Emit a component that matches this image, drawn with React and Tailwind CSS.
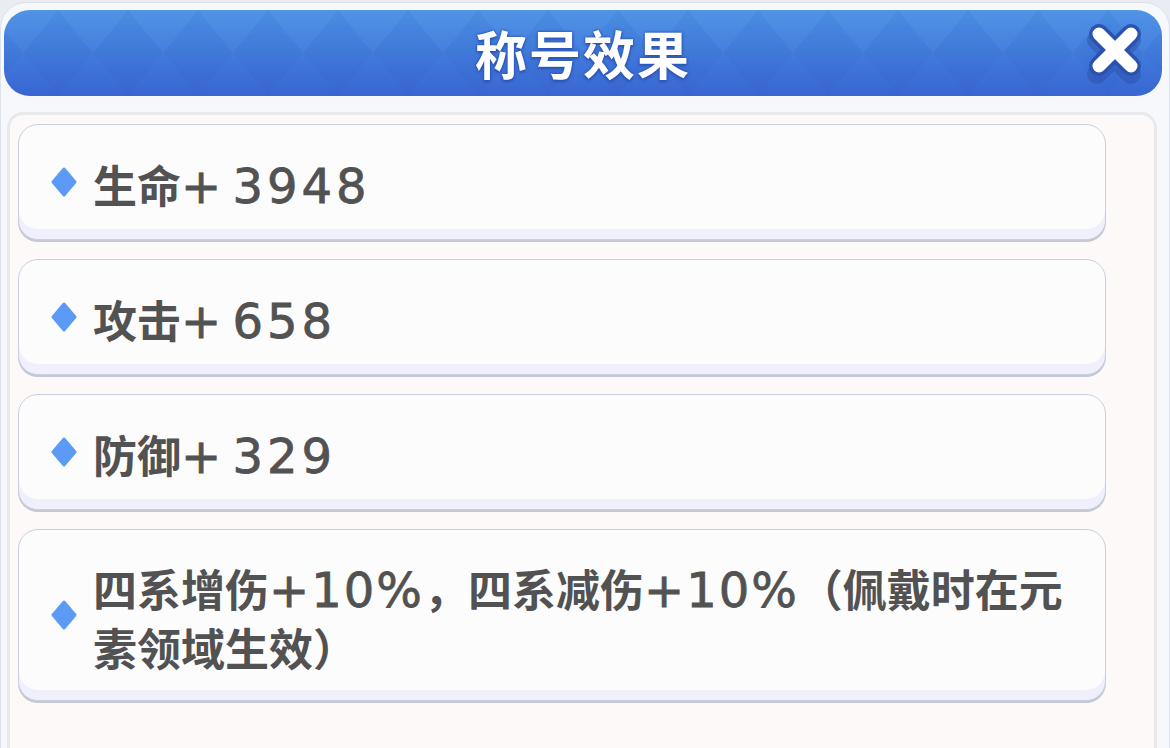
import React from 'react';

const cjk = "font-['Noto_Sans_CJK_SC','Noto_Sans_CJK_JP',sans-serif]";

function Num({ tight, children }) {
  return (
    <span
      className={`font-['DejaVu_Sans',sans-serif] font-normal text-[48px] [word-spacing:-12px] [-webkit-text-stroke:0.8px_#525252] ${
        tight ? 'tracking-[2px]' : 'tracking-[4px]'
      }`}
    >
      {children}
    </span>
  );
}

function Diamond() {
  return (
    <svg width="26" height="30" viewBox="0 0 26 30" className="shrink-0 mb-[6px]">
      <path
        d="M13 2 L24 15 L13 28 L2 15 Z"
        fill="#5b9af5"
        stroke="#5b9af5"
        strokeWidth="3"
        strokeLinejoin="round"
      />
    </svg>
  );
}

function EffectCard({ tall, children }) {
  return (
    <div
      className={`flex items-center gap-4 pl-8 pr-6 pt-[6px] rounded-[20px] border border-[#c9cfe3] bg-[#fcfcfd] shadow-[inset_0_-10px_0_#eff0fb,0_2px_0_#c5c8d2] ${
        tall ? 'h-[172px]' : 'h-[116px]'
      }`}
    >
      <Diamond />
      <div className={`${cjk} text-[44px] leading-[57px] font-semibold text-[#525252]`}>{children}</div>
    </div>
  );
}

function CloseIcon() {
  return (
    <svg width="64" height="64" viewBox="0 0 64 64">
      <g strokeLinecap="round">
        <path d="M14 18 L48 52 M48 18 L14 52" stroke="#2a4a9c" strokeWidth="20" opacity="0.4" />
        <path d="M16 12 L48 44 M48 12 L16 44" stroke="#2b52b0" strokeWidth="20" />
        <path d="M16 12 L48 44 M48 12 L16 44" stroke="#ffffff" strokeWidth="13" />
      </g>
    </svg>
  );
}

export default function App() {
  return (
    <div className="w-[1170px] h-[748px] overflow-hidden bg-[#e9edf3]">
      <div className="mt-[2px] h-[760px] rounded-t-[26px] border border-[#dde2ea] bg-[#f6f8fc] px-[3px] pt-[7px]">
        {/* header */}
        <div className="relative h-[86px] w-[1158px] overflow-hidden rounded-[26px] bg-gradient-to-b from-[#4c92e5] to-[#3965d2]">
          <svg className="absolute inset-0" width="1158" height="86">
            <defs>
              <pattern id="dia" width="70" height="86" patternUnits="userSpaceOnUse" x="-16" y="0">
                <path d="M0 0 L35 43 L0 86 Z M70 0 L35 43 L70 86 Z" fill="#1f3fa8" opacity="0.06" />
                <path d="M35 43 L70 0 L0 0 Z" fill="#ffffff" opacity="0.02" />
              </pattern>
            </defs>
            <rect width="1158" height="86" fill="url(#dia)" />
          </svg>
          <div className="relative flex h-full items-center justify-center">
            <span
              className={`${cjk} text-[52px] font-bold tracking-[2px] text-white [text-shadow:0_0_2px_#2c55b3,0_0_3px_#2c55b3,0_2px_3px_#2c55b3]`}
            >
              称号效果
            </span>
          </div>
          <div className="absolute right-[15px] top-[12px]">
            <CloseIcon />
          </div>
        </div>

        {/* body */}
        <div className="mt-[16px] ml-[3px] w-[1150px] h-[700px] rounded-[16px] border-[3px] border-[#e9e9ec] bg-[#fdf9f8] pt-[9px] pl-[8px]">
          <div className="flex w-[1088px] flex-col gap-[19px]">
            <EffectCard>
              生命<Num>+ 3948</Num>
            </EffectCard>
            <EffectCard>
              攻击<Num>+ 658</Num>
            </EffectCard>
            <EffectCard>
              防御<Num>+ 329</Num>
            </EffectCard>
            <EffectCard tall>
              四系增伤<Num tight>+10%</Num>，四系减伤<Num tight>+10%</Num>（佩戴时在元
              <br />
              素领域生效）
            </EffectCard>
          </div>
        </div>
      </div>
    </div>
  );
}
